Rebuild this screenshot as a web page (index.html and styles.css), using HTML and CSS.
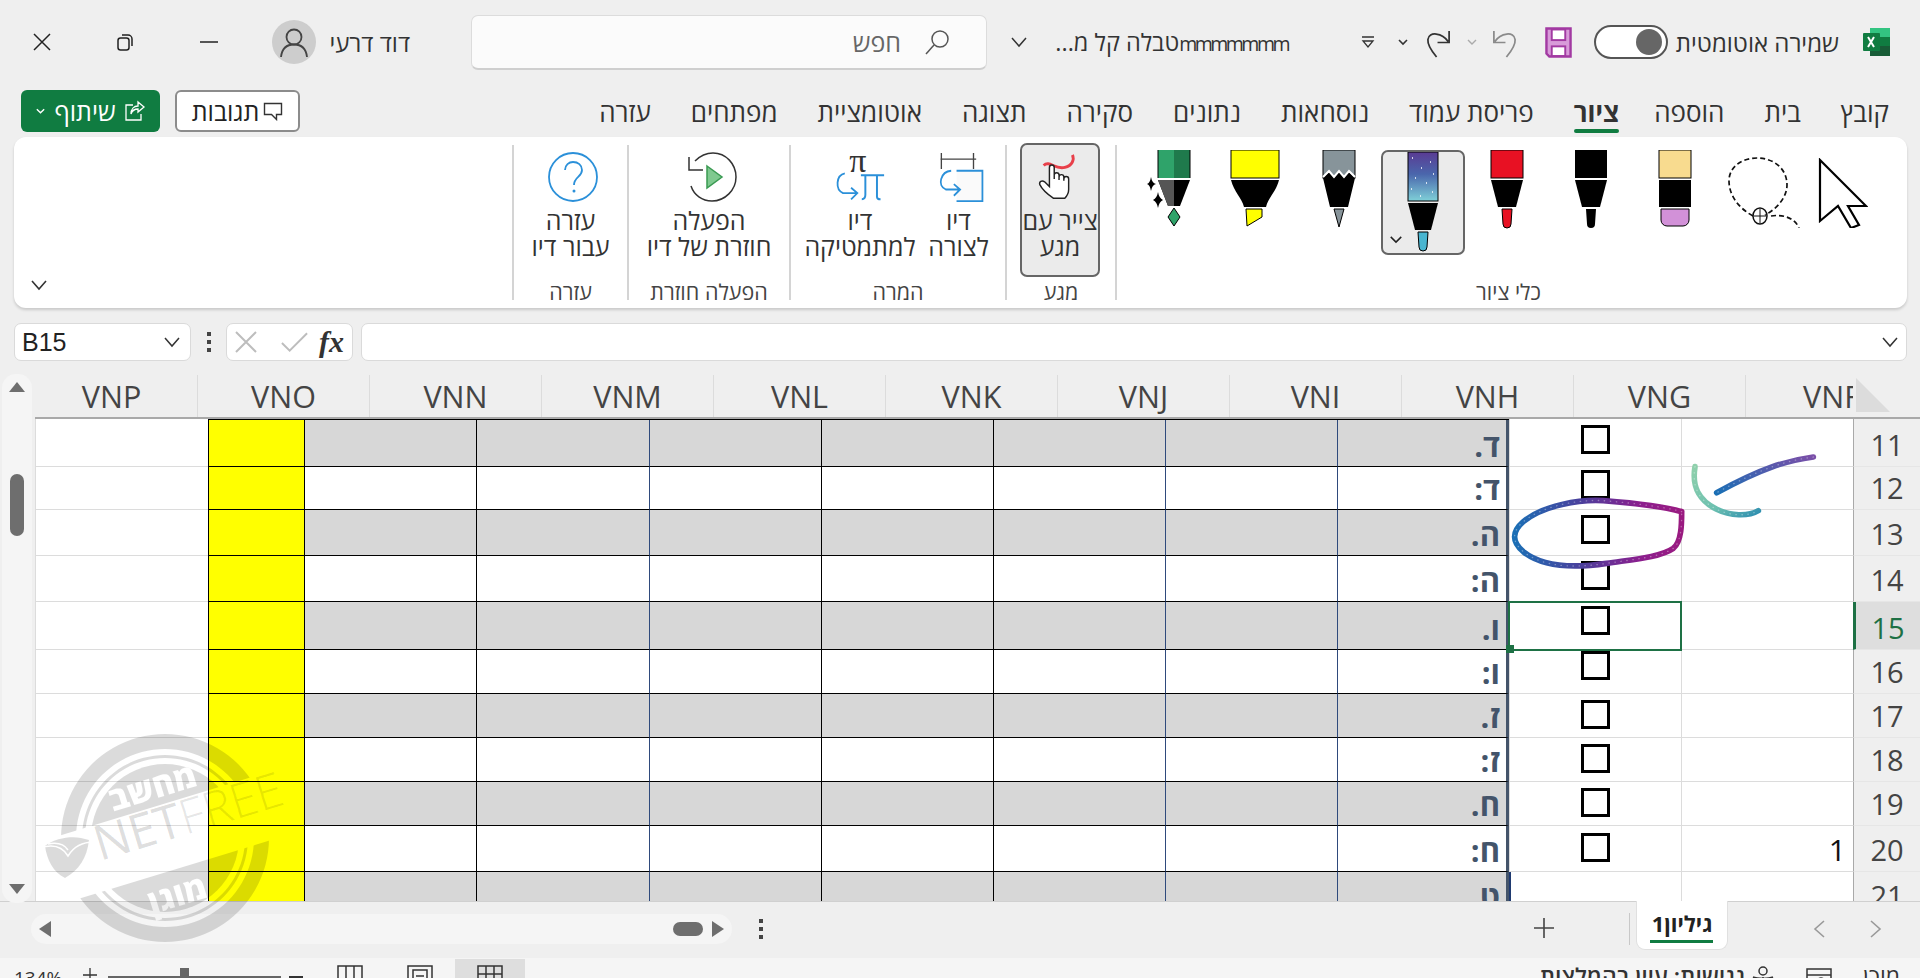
FILE: index.html
```html
<!DOCTYPE html>
<html lang="he" dir="rtl">
<head>
<meta charset="utf-8">
<title>Excel</title>
<link rel="stylesheet" href="styles.css">
</head>
<body>
<div class="app">

<header class="titlebar">
  <svg class="ic-excel" viewBox="0 0 30 30"><rect x="8" y="1" width="20" height="9" fill="#33c481"/><rect x="8" y="10" width="10" height="9" fill="#21a366"/><rect x="18" y="10" width="10" height="9" fill="#107c41"/><rect x="8" y="19" width="20" height="10" fill="#185c37"/><rect x="1" y="6" width="17" height="18" rx="1" fill="#107c41"/><path d="M6 10l6 10M12 10l-6 10" stroke="#fff" stroke-width="2"/></svg>
  <span class="autosave">שמירה אוטומטית</span>
  <span class="toggle"><span class="knob"></span></span>
  <svg class="ic-save" viewBox="0 0 28 32"><path d="M1.500 1.500h25v29h-22l-3-3z" fill="#d89bd9" stroke="#a23aa2" stroke-width="2.500"/><rect x="7" y="2.500" width="14" height="11" fill="#fff" stroke="#a23aa2" stroke-width="2"/><rect x="7" y="20" width="14" height="10" fill="#fff" stroke="#a23aa2" stroke-width="2"/></svg>
  <svg class="ic-undo" viewBox="0 0 28 32"><path d="M3 4v12h12M4 15C10 6 24 4 25 13c.5 5-4 12-9 18" fill="none" stroke="#8a8a8a" stroke-width="1.800"/></svg>
  <svg class="ic-chev gray" viewBox="0 0 12 8"><path d="M2 2l4 4 4-4" fill="none" stroke="#aaa" stroke-width="1.400"/></svg>
  <svg class="ic-redo" viewBox="0 0 28 32"><path d="M25 4v12H13M24 15C18 6 4 4 3 13c-.5 5 4 12 9 18" fill="none" stroke="#333" stroke-width="1.800"/></svg>
  <svg class="ic-chev dark" viewBox="0 0 12 8"><path d="M2 2l4 4 4-4" fill="none" stroke="#333" stroke-width="1.600"/></svg>
  <svg class="ic-custom" viewBox="0 0 14 14"><path d="M1 2h12M2 6h10L7 12z" fill="none" stroke="#333" stroke-width="1.300"/></svg>
  <span class="doc-title"><bdi class="doc-latin">mmmmmmm</bdi>טבלה קל מ...</span>
  <svg class="ic-chev-big" viewBox="0 0 18 12"><path d="M2 2l7 8 7-8" fill="none" stroke="#333" stroke-width="1.500"/></svg>
  <div class="search">
    <svg class="ic-search" viewBox="0 0 28 28"><circle cx="17" cy="11" r="8" fill="none" stroke="#555" stroke-width="1.500"/><path d="M11 17L3 26" stroke="#555" stroke-width="1.500"/></svg>
    <span class="search-text">חפש</span>
  </div>
  <span class="user">דוד דרעי</span>
  <svg class="avatar" viewBox="0 0 44 44"><circle cx="22" cy="22" r="22" fill="#cdcdcd"/><circle cx="22" cy="17" r="7.500" fill="none" stroke="#444" stroke-width="1.800"/><path d="M9 37c1-9 6-12.500 13-12.500S34 28 35 37" fill="none" stroke="#444" stroke-width="1.800"/></svg>
  <svg class="ic-win min" viewBox="0 0 20 20"><path d="M1 10h18" stroke="#222" stroke-width="1.500"/></svg>
  <svg class="ic-win max" viewBox="0 0 20 20"><rect x="3" y="6" width="11" height="12" rx="2.500" fill="none" stroke="#222" stroke-width="1.500"/><path d="M7 3h6a4 4 0 0 1 4 4v7" fill="none" stroke="#222" stroke-width="1.500"/></svg>
  <svg class="ic-win close" viewBox="0 0 20 20"><path d="M2 2l16 16M18 2L2 18" stroke="#222" stroke-width="1.500"/></svg>
</header>

<nav class="tabsrow">
  <div class="tabs">
    <span class="tab">קובץ</span>
    <span class="tab">בית</span>
    <span class="tab">הוספה</span>
    <span class="tab active">ציור</span>
    <span class="tab">פריסת עמוד</span>
    <span class="tab">נוסחאות</span>
    <span class="tab">נתונים</span>
    <span class="tab">סקירה</span>
    <span class="tab">תצוגה</span>
    <span class="tab">אוטומציית</span>
    <span class="tab">מפתחים</span>
    <span class="tab">עזרה</span>
  </div>
  <div class="actions">
    <button class="btn-comments">
      <svg class="ic-comment" viewBox="0 0 20 20"><path d="M1.500 2.500h17v11h-5v5l-5-5h-7z" fill="none" stroke="#333" stroke-width="1.400"/></svg>
      <span>תגובות</span>
    </button>
    <button class="btn-share">
      <svg class="ic-share" viewBox="0 0 22 22"><path d="M14 2l6 5-6 5V9c-4 0-6 2-7 5 0-5 3-8 7-8z" fill="none" stroke="#fff" stroke-width="1.300"/><path d="M9 5H2v15h15v-6" fill="none" stroke="#fff" stroke-width="1.300"/></svg>
      <span>שיתוף</span>
      <svg class="ic-sharechev" viewBox="0 0 12 8"><path d="M2 2l4 4 4-4" fill="none" stroke="#fff" stroke-width="1.500"/></svg>
    </button>
  </div>
</nav>

<section class="ribbon">
  <div class="group g-tools">
    <div class="tools">
      <div class="tool"><svg class="t-arrow" viewBox="0 0 50 70"><path d="M2 2l46 46H30l11 19-8 3-13-22-18 15z" fill="#fff" stroke="#000" stroke-width="2.200"/></svg></div>
      <div class="tool"><svg class="t-lasso" viewBox="0 0 74 72"><path d="M26 60C8 50 2 36 2 25 2 10 16 2 30 2c16 0 30 10 30 27 0 12-10 24-22 30" fill="none" stroke="#111" stroke-width="1.700" stroke-dasharray="5 3"/><ellipse cx="33" cy="60" rx="7" ry="8" fill="none" stroke="#111" stroke-width="1.500"/><path d="M27 60h12M33 53v14" stroke="#111" stroke-width="1"/><path d="M44 60c12-2 24 2 28 12" fill="none" stroke="#111" stroke-width="1.700" stroke-dasharray="5 3"/></svg></div>
      <div class="tool"><svg class="pen" viewBox="0 0 40 80"><rect x="4" y="0" width="32" height="28" fill="#f8db8f" stroke="#000"/><rect x="4" y="30" width="32" height="27" fill="#000"/><path d="M6 59h28v11a6 6 0 0 1-6 6H12a6 6 0 0 1-6-6z" fill="#d291d8" stroke="#000"/></svg></div>
      <div class="tool"><svg class="pen" viewBox="0 0 40 80"><rect x="4" y="0" width="32" height="28" fill="#000"/><path d="M4 30h32l-7 27H11z" fill="#000"/><path d="M15 59h10l-1 15a4 4 0 0 1-8 0z" fill="#000"/></svg></div>
      <div class="tool"><svg class="pen" viewBox="0 0 40 80"><rect x="4" y="0" width="32" height="28" fill="#e81123" stroke="#000"/><path d="M4 30h32l-7 27H11z" fill="#000"/><path d="M15 59h10l-1 15a4 4 0 0 1-8 0z" fill="#e81123" stroke="#000"/></svg></div>
      <div class="tool selected">
        <svg class="pen tall" viewBox="0 0 40 100"><defs><linearGradient id="gal" x1="0" y1="0" x2="0" y2="1"><stop offset="0" stop-color="#5a3b93"/><stop offset=".45" stop-color="#4a66ac"/><stop offset="1" stop-color="#7fd0d8"/></linearGradient></defs><rect x="5" y="0" width="30" height="49" fill="url(#gal)" stroke="#000"/><path d="M9 6h1M27 10h1M18 16h1M30 22h1M12 26h1M23 31h1M8 37h1M29 40h1M17 44h1" stroke="#fff" stroke-width="1.500"/><path d="M5 51h30l-7 27H12z" fill="#000"/><path d="M15 80h10l-1 15a4 4 0 0 1-8 0z" fill="#49b5d0" stroke="#000"/></svg>
        <svg class="tool-chev" viewBox="0 0 16 10"><path d="M2 2l6 6 6-6" fill="none" stroke="#222" stroke-width="1.700"/></svg>
      </div>
      <div class="tool"><svg class="pen" viewBox="0 0 40 80"><rect x="4" y="0" width="32" height="28" fill="#87949a" stroke="#000"/><path d="M4 28l6-6 5 6 5-6 5 6 5-6 6 6-7 29H11z" fill="#000"/><path d="M4 27l6-6 5 6 5-6 5 6 5-6 6 6" fill="none" stroke="#fff" stroke-width="2"/><path d="M15 59h10l-5 18z" fill="#87949a" stroke="#000"/></svg></div>
      <div class="tool"><svg class="pen wide" viewBox="0 0 50 80"><rect x="1" y="0" width="48" height="28" fill="#ff0" stroke="#000"/><path d="M1 30h48c-3 12-11 18-13 27H14C12 48 4 42 1 30z" fill="#000"/><path d="M16 59h16v8L17 76z" fill="#ff0" stroke="#000"/></svg></div>
      <div class="tool"><svg class="pen wide" viewBox="0 0 50 80"><rect x="12" y="0" width="16" height="28" fill="#2fa36a"/><rect x="28" y="0" width="16" height="28" fill="#1f7a4c"/><path d="M12 0v28M44 0v28" stroke="#000"/><path d="M12 30h32l-10 26H22z" fill="#000"/><path d="M12 30h16v26h-6z" fill="#555"/><path d="M28 58l6 9-6 9-6-9z" fill="#2fa36a" stroke="#000"/><path d="M5 27q1 6 5 7-4 1-5 7-1-6-4-7 3-1 4-7zM12 42q1 6 5 8-4 2-5 8-1-6-5-8 4-2 5-8z" fill="#000"/></svg></div>
    </div>
    <div class="glabel tools-label">כלי ציור</div>
  </div>

  <div class="group g-touch">
    <div class="touch-btn">
      <svg class="bigicon" viewBox="0 0 50 52"><path d="M8 14c6-6 12 5 22 2 8-2 10-8 8-13" fill="none" stroke="#e8404a" stroke-width="3"/><path d="M18 48C12 44 6 38 4 34c-1-3 2-5 5-3l5 5V16a2.500 2.500 0 0 1 5 0v12-4a2.500 2.500 0 0 1 5 0v5-3a2.500 2.500 0 0 1 5 0v4-2a2.500 2.500 0 0 1 5 0v11c0 4-2 7-4 9z" fill="#fff" stroke="#222" stroke-width="1.500"/></svg>
      <span class="btext">צייר עם<br>מגע</span>
    </div>
    <div class="glabel">מגע</div>
  </div>

  <div class="group g-convert">
    <div class="bigrow">
      <div class="bigbtn b-shape">
        <svg class="bigicon nudge" viewBox="2 0 50 56"><path d="M4 8h40M5 1v18M41 1v18" stroke="#444" stroke-width="1.500"/><path d="M22 21h29v34H22" fill="#fafafa" stroke="#2b90d9" stroke-width="2"/><path d="M16 21C4 22 0 38 10 42h15M19 36l7 6-7 7" fill="none" stroke="#2b90d9" stroke-width="2"/></svg>
        <span class="btext">דיו<br>לצורה</span>
      </div>
      <div class="bigbtn b-math">
        <svg class="bigicon" viewBox="0 0 54 56"><text x="15" y="22" class="pi-small">π</text><path d="M28 26h26M33 26v22c0 3-1 5-4 5M46 26v24c0 2 2 3 4 3" fill="none" stroke="#2b90d9" stroke-width="2.200"/><path d="M10 24C0 26-1 42 8 46h15M17 40l7 6-7 7" fill="none" stroke="#2b90d9" stroke-width="2"/></svg>
        <span class="btext">דיו<br>למתמטיקה</span>
      </div>
    </div>
    <div class="glabel">המרה</div>
  </div>

  <div class="group g-replay">
    <div class="bigbtn">
      <svg class="bigicon nudge" viewBox="0 0 50 50"><path d="M8 9C14 3 20 1 26 1c13 0 23 11 23 24S38 49 25 49c-10 0-18-6-21-15" fill="none" stroke="#333" stroke-width="1.500"/><path d="M2 5v13h14" fill="none" stroke="#333" stroke-width="1.500"/><path d="M20 14l15 11-15 11z" fill="#7fc98f" stroke="#3a9a52" stroke-width="1.500"/></svg>
      <span class="btext">הפעלה<br>חוזרת של דיו</span>
    </div>
    <div class="glabel">הפעלה חוזרת</div>
  </div>

  <div class="group g-help">
    <div class="bigbtn">
      <svg class="bigicon nudge" viewBox="0 0 50 50"><circle cx="25" cy="25" r="24" fill="none" stroke="#2b90d9" stroke-width="1.800"/><path d="M17 18c0-5 4-8 8-8 5 0 9 3 9 8 0 7-8 7-8 15" fill="none" stroke="#2b90d9" stroke-width="1.800"/><circle cx="26" cy="39" r="1.500" fill="#2b90d9"/></svg>
      <span class="btext">עזרה<br>עבור דיו</span>
    </div>
    <div class="glabel">עזרה</div>
  </div>

  <svg class="ribbon-collapse" viewBox="0 0 18 12"><path d="M2 2l7 8 7-8" fill="none" stroke="#333" stroke-width="1.600"/></svg>
</section>

<div class="formula">
  <div class="fx-input"><svg class="ic-chev-form" viewBox="0 0 18 12"><path d="M2 2l7 8 7-8" fill="none" stroke="#333" stroke-width="1.500"/></svg></div>
  <div class="fx-box">
    <i class="fx-text">fx</i>
    <svg class="fx-check" viewBox="0 0 30 22"><path d="M2 12l8 8L28 2" fill="none" stroke="#bdbdbd" stroke-width="2"/></svg>
    <svg class="fx-cross" viewBox="0 0 22 22"><path d="M1 1l20 20M21 1L1 21" stroke="#bdbdbd" stroke-width="2"/></svg>
  </div>
  <div class="vdots"><i></i><i></i><i></i></div>
  <div class="namebox"><span>B15</span><svg class="ic-chev-form" viewBox="0 0 18 12"><path d="M2 2l7 8 7-8" fill="none" stroke="#333" stroke-width="1.500"/></svg></div>
</div>

<main class="sheet">
  <div class="sheet-main">
    <div class="colhead">
      <div class="corner"><svg class="corner-tri" viewBox="0 0 34 34"><path d="M0 0v34h34z" fill="#dcdcdc"/></svg></div>
      <div class="collabels">
        <span class="ch">VNF</span><span class="ch">VNG</span><span class="ch">VNH</span><span class="ch">VNI</span><span class="ch">VNJ</span><span class="ch">VNK</span><span class="ch">VNL</span><span class="ch">VNM</span><span class="ch">VNN</span><span class="ch">VNO</span><span class="ch">VNP</span>
      </div>
    </div>
    <div class="rows">
      <div class="rh">11</div><div class="c l num"></div><div class="c l"><span class="cb o6"></span></div><div class="c g t nv">ד.</div><div class="c g nv"></div><div class="c g"></div><div class="c g"></div><div class="c g nv"></div><div class="c g"></div><div class="c g"></div><div class="c y"></div><div class="c l"></div>
      <div class="rh">12</div><div class="c l num"></div><div class="c l"><span class="cb o3"></span></div><div class="c w t nv">ד:</div><div class="c w nv"></div><div class="c w"></div><div class="c w"></div><div class="c w nv"></div><div class="c w"></div><div class="c w"></div><div class="c y"></div><div class="c l"></div>
      <div class="rh">13</div><div class="c l num"></div><div class="c l"><span class="cb o5"></span></div><div class="c g t nv">ה.</div><div class="c g nv"></div><div class="c g"></div><div class="c g"></div><div class="c g nv"></div><div class="c g"></div><div class="c g"></div><div class="c y"></div><div class="c l"></div>
      <div class="rh">14</div><div class="c l num"></div><div class="c l"><span class="cb o5"></span></div><div class="c w t nv">ה:</div><div class="c w nv"></div><div class="c w"></div><div class="c w"></div><div class="c w nv"></div><div class="c w"></div><div class="c w"></div><div class="c y"></div><div class="c l"></div>
      <div class="rh sel">15</div><div class="c l num"></div><div class="c l"><span class="cb o4"></span></div><div class="c g t nv">ו.</div><div class="c g nv"></div><div class="c g"></div><div class="c g"></div><div class="c g nv"></div><div class="c g"></div><div class="c g"></div><div class="c y"></div><div class="c l"></div>
      <div class="rh">16</div><div class="c l num"></div><div class="c l"><span class="cb o1"></span></div><div class="c w t nv">ו:</div><div class="c w nv"></div><div class="c w"></div><div class="c w"></div><div class="c w nv"></div><div class="c w"></div><div class="c w"></div><div class="c y"></div><div class="c l"></div>
      <div class="rh">17</div><div class="c l num"></div><div class="c l"><span class="cb o6"></span></div><div class="c g t nv">ז.</div><div class="c g nv"></div><div class="c g"></div><div class="c g"></div><div class="c g nv"></div><div class="c g"></div><div class="c g"></div><div class="c y"></div><div class="c l"></div>
      <div class="rh">18</div><div class="c l num"></div><div class="c l"><span class="cb o6"></span></div><div class="c w t nv">ז:</div><div class="c w nv"></div><div class="c w"></div><div class="c w"></div><div class="c w nv"></div><div class="c w"></div><div class="c w"></div><div class="c y"></div><div class="c l"></div>
      <div class="rh">19</div><div class="c l num"></div><div class="c l"><span class="cb o6"></span></div><div class="c g t nv">ח.</div><div class="c g nv"></div><div class="c g"></div><div class="c g"></div><div class="c g nv"></div><div class="c g"></div><div class="c g"></div><div class="c y"></div><div class="c l"></div>
      <div class="rh">20</div><div class="c l num">1</div><div class="c l"><span class="cb o7"></span></div><div class="c w t nv">ח:</div><div class="c w nv"></div><div class="c w"></div><div class="c w"></div><div class="c w nv"></div><div class="c w"></div><div class="c w"></div><div class="c y"></div><div class="c l"></div>
      <div class="rh">21</div><div class="c l num"></div><div class="c l nvl"></div><div class="c g t nv">ט.</div><div class="c g nv"></div><div class="c g"></div><div class="c g"></div><div class="c g nv"></div><div class="c g"></div><div class="c g"></div><div class="c y"></div><div class="c l"></div>
      <div class="selection"><span class="handle"></span></div>
    </div>
  </div>
  <div class="vscroll">
    <span class="tri-up"></span>
    <span class="vthumb"></span>
    <span class="tri-down"></span>
  </div>
</main>

<div class="sheetbar">
  <div class="nav">
    <svg class="navchev" viewBox="0 0 12 20"><path d="M1 2l9 8-9 8" fill="none" stroke="#999" stroke-width="1.600"/></svg>
    <svg class="navchev" viewBox="0 0 12 20"><path d="M11 2l-9 8 9 8" fill="none" stroke="#999" stroke-width="1.600"/></svg>
  </div>
  <div class="sheettab"><span>גיליון1</span></div>
  <span class="tabsep"></span>
  <svg class="ic-plus" viewBox="0 0 22 22"><path d="M1 11h20M11 1v20" stroke="#444" stroke-width="1.600"/></svg>
  <div class="vdots small"><i></i><i></i><i></i></div>
  <div class="hscroll"><span class="tri-right"></span><span class="hthumb"></span><span class="tri-left"></span></div>
</div>

<footer class="status">
  <span class="st-ready">מוכן</span>
  <svg class="st-icon" viewBox="0 0 26 26"><rect x="1" y="2" width="24" height="22" fill="none" stroke="#333" stroke-width="1.500"/><path d="M1 8h24" stroke="#333" stroke-width="1.500"/><circle cx="15" cy="15" r="4" fill="none" stroke="#333" stroke-width="1.500"/></svg>
  <svg class="st-people" viewBox="0 0 24 24"><circle cx="12" cy="6" r="4" fill="none" stroke="#333" stroke-width="1.500"/><path d="M2 12c4 2 16 2 20 0M12 12v8M6 24l6-6 6 6" fill="none" stroke="#333" stroke-width="1.500"/></svg>
  <span class="st-access">נגישות: עיין בהמלצות</span>
  <div class="st-left">
    <span class="view active"><svg class="v-ic" viewBox="0 0 26 26"><rect x="1" y="1" width="24" height="24" fill="none" stroke="#333" stroke-width="1.500"/><path d="M9 1v24M17 1v24M1 9h24M1 17h24" stroke="#333" stroke-width="1.500"/></svg></span>
    <span class="view"><svg class="v-ic" viewBox="0 0 26 26"><rect x="1" y="1" width="24" height="24" fill="none" stroke="#333" stroke-width="1.500"/><rect x="6" y="5" width="14" height="20" fill="none" stroke="#333" stroke-width="1.500"/><path d="M9 11h8M9 15h8" stroke="#333" stroke-width="1.500"/></svg></span>
    <span class="view"><svg class="v-ic" viewBox="0 0 26 26"><rect x="1" y="1" width="24" height="24" fill="none" stroke="#333" stroke-width="1.500"/><path d="M9 1v24M17 1v24" stroke="#333" stroke-width="1.500"/></svg></span>
    <span class="zminus"></span>
    <span class="zslider"><span class="zthumb"></span></span>
    <svg class="zplus" viewBox="0 0 14 14"><path d="M0 7h14M7 0v14" stroke="#333" stroke-width="1.300"/></svg>
    <span class="zpct">134%</span>
  </div>
</footer>

<svg class="ink" viewBox="0 0 1500 900">
  <defs>
    <linearGradient id="inkA" x1="0" y1="0" x2="1" y2="0"><stop offset="0" stop-color="#1b6fb5"/><stop offset=".4" stop-color="#4b3f9c"/><stop offset=".75" stop-color="#8b1f8e"/><stop offset="1" stop-color="#9a1a80"/></linearGradient>
    <linearGradient id="inkB" x1="0" y1="1" x2="1" y2="0"><stop offset="0" stop-color="#1b6fb5"/><stop offset="1" stop-color="#7a4fa8"/></linearGradient>
    <linearGradient id="inkC" x1="0" y1="0" x2="1" y2="1"><stop offset="0" stop-color="#8fd0ac"/><stop offset=".6" stop-color="#6cc0b0"/><stop offset="1" stop-color="#2f8fb0"/></linearGradient>
  </defs>
  <path class="stroke" stroke="url(#inkA)" d="M785 395C740 382 650 370 550 362 480 358 370 375 310 425 275 455 275 485 310 515 360 555 440 568 560 550 640 538 720 532 760 505 785 485 785 430 785 395"/>
  <path class="glit" d="M785 395C740 382 650 370 550 362 480 358 370 375 310 425 275 455 275 485 310 515 360 555 440 568 560 550 640 538 720 532 760 505 785 485 785 430 785 395"/>
  <path class="stroke" stroke="url(#inkB)" d="M1180 231C1100 242 1030 262 890 338"/>
  <path class="glit" d="M1180 231C1100 242 1030 262 890 338"/>
  <path class="stroke" stroke="url(#inkC)" d="M825 260C815 320 835 360 890 388 930 408 985 410 1015 392"/>
  <path class="glit" d="M825 260C815 320 835 360 890 388 930 408 985 410 1015 392"/>
</svg>

<svg class="watermark" viewBox="0 0 240 224">
  <defs>
    <mask id="wm" maskUnits="userSpaceOnUse" x="0" y="0" width="240" height="224">
      <rect width="240" height="224" fill="#fff"/>
      <rect x="-40" y="79" width="320" height="66" fill="#000" transform="rotate(-17 105 112)"/>
      <text x="93" y="73" class="wm-he" transform="rotate(-17 93 63)">מחשב</text>
      <text x="118" y="180" class="wm-he" transform="rotate(-17 118 170)">מוגן</text>
    </mask>
  </defs>
  <g mask="url(#wm)" fill="rgba(0,0,0,.14)">
    <path fill-rule="evenodd" d="M105 8a104 104 0 1 0 .01 0zM105 23a89 89 0 1 1-.01 0z"/>
    <path fill-rule="evenodd" d="M105 29a83 83 0 1 0 .01 0zM105 32a80 80 0 1 1-.01 0z"/>
    <circle cx="105" cy="112" r="74"/>
  </g>
  <text x="40" y="135" class="wm-net" transform="rotate(-17 40 135)">NET<tspan class="wm-free">FREE</tspan></text>
  <path d="M-15 120c10-8 26-10 36-8l8 2c-2 18-10 30-24 38C-7 146-13 134-15 120z" fill="rgba(0,0,0,.14)"/>
  <path d="M-20 122c12-4 22-2 28 8 6-10 16-14 26-14M-12 118c10-2 16 0 20 6" fill="none" stroke="#fff" stroke-width="1.500"/>
</svg>

</div>
</body>
</html>
```
FILE: styles.css
```css
* { box-sizing: border-box; }
html, body { margin: 0; height: 978px; overflow: hidden; }
body { background: #efefef; font-family: "Open Sans", "Liberation Sans", "DejaVu Sans", sans-serif; color: #333; }
.app { position: relative; width: 1920px; height: 978px; overflow: hidden; display: flex; flex-direction: column; }
.app > * { flex: none; }
svg { display: block; flex: none; }

/* title bar */
.titlebar { height: 84px; display: flex; align-items: center; padding: 0 28px 0 0; font-size: 24px; }
.ic-excel { width: 30px; height: 30px; }
.autosave { width: 164px; margin-right: 23px; white-space: nowrap; }
.toggle { width: 74px; height: 34px; margin-right: 7px; border: 2px solid #555; border-radius: 17px; background: #fff; display: flex; align-items: center; padding-right: 4px; }
.knob { width: 26px; height: 26px; border-radius: 50%; background: #666; }
.ic-save { width: 27px; height: 31px; margin-right: 22px; }
.ic-undo { width: 27px; height: 31px; margin-right: 27px; }
.ic-chev { width: 12px; height: 8px; margin-right: 13px; }
.ic-redo { width: 27px; height: 31px; margin-right: 14px; }
.ic-chev.dark { margin-right: 16px; }
.ic-custom { width: 14px; height: 14px; margin-right: 22px; }
.doc-title { width: 235px; margin-right: 73px; white-space: nowrap; font-size: 23.500px; }
.doc-latin { font-size: 19.500px; letter-spacing: -2.500px; }
.ic-chev-big { width: 18px; height: 12px; margin-right: 25px; }
.search { width: 516px; height: 55px; margin-right: 23px; background: #fbfbfb; border: 1px solid #dcdcdc; border-bottom: 2px solid #cfcfcf; border-radius: 7px; display: flex; align-items: center; padding-right: 35px; }
.ic-search { width: 28px; height: 28px; }
.search-text { margin-right: 22px; color: #666; font-size: 25px; }
.user { width: 84px; margin-right: 61px; margin-left: 10px; white-space: nowrap; }
.avatar { width: 44px; height: 44px; margin-left: 53px; }
.ic-win { width: 20px; height: 20px; }
.ic-win.min { margin-left: 64px; }
.ic-win.max { margin-left: 63px; }

/* tabs */
.tabsrow { height: 53px; display: flex; align-items: center; justify-content: space-between; padding: 0 31px 0 21px; }
.tabs { display: flex; gap: 40px; height: 53px; align-items: center; }
.tab { position: relative; font-size: 26px; color: #333; white-space: nowrap; top: 1px; }
.tab.active { font-weight: 700; margin-right: -5px; }
.tab.active::after { content: ""; position: absolute; left: 0; right: 0; bottom: -3px; height: 4px; background: #107c41; border-radius: 2px; }
.actions { display: flex; gap: 15px; }
.btn-comments, .btn-share { font: inherit; font-size: 25px; height: 42px; border-radius: 6px; display: flex; align-items: center; justify-content: center; gap: 4px; padding: 0; }
.btn-comments { width: 125px; background: #fff; border: 2px solid #8c8c8c; color: #222; }
.ic-comment { width: 20px; height: 20px; }
.btn-share { width: 139px; background: #107c41; border: 0; color: #fff; gap: 8px; }
.ic-share { width: 22px; height: 22px; }
.ic-sharechev { width: 11px; height: 8px; }

/* ribbon */
.ribbon { position: relative; height: 171px; margin: 0 13px 0 14px; padding: 8px 0 0; background: #fff; border-radius: 12px; box-shadow: 0 2px 3px rgba(0,0,0,.16); display: flex; font-size: 25px; }
.group { height: 155px; display: flex; flex-direction: column; border-left: 2px solid #d4d4d4; }
.glabel { margin-top: auto; margin-bottom: -4px; height: 24px; line-height: 24px; font-size: 21.500px; text-align: center; color: #444; white-space: nowrap; }
.tools-label { padding-right: 7px; }
.g-tools { width: 792px; }
.g-touch { width: 110px; }
.g-convert { width: 216px; }
.g-replay { width: 162px; }
.g-help { width: 115px; }
.tools { display: flex; padding: 5px 22px 0 0; }
.tool { position: relative; width: 84px; display: flex; justify-content: center; height: 105px; }
.pen { width: 40px; height: 80px; }
.pen.wide { width: 50px; }
.pen.tall { height: 100px; }
.t-arrow { width: 50px; height: 70px; margin-top: 8px; }
.t-lasso { width: 74px; height: 72px; margin-top: 6px; margin-right: -10px; }
.tool.selected { height: 105px; background: #ebebeb; border: 2px solid #666; border-radius: 7px; }
.tool-chev { position: absolute; left: 6px; bottom: 9px; width: 14px; height: 9px; }
.touch-btn { width: 80px; height: 134px; margin: -2px 15px 0 15px; background: #ebebeb; border: 2px solid #666; border-radius: 7px; display: flex; flex-direction: column; align-items: center; padding-top: 7px; }
.bigicon { width: 50px; height: 50px; }
.bigicon.nudge { margin-left: 5px; }
.btext { display: block; margin-top: 5px; line-height: 26px; text-align: center; white-space: nowrap; color: #333; }
.bigrow { display: flex; justify-content: center; gap: 18px; }
.bigbtn { display: flex; flex-direction: column; align-items: center; padding-top: 7px; }
.b-shape { width: 58px; }
.b-math { width: 103px; }
.pi-small { font: 38px "Liberation Serif", serif; fill: #333; direction: ltr; }
.ribbon-collapse { position: absolute; left: 16px; bottom: 17px; width: 18px; height: 12px; }

/* formula */
.formula { height: 38px; margin: 15px 13px 14px 14px; display: flex; }
.fx-input { flex: 1; height: 38px; margin-left: 8px; background: #fff; border: 1px solid #dadada; border-radius: 7px; display: flex; align-items: center; padding-right: 7px; }
.ic-chev-form { width: 18px; height: 12px; }
.fx-box { width: 127px; height: 38px; background: #fff; border: 1px solid #dadada; border-radius: 7px; display: flex; align-items: center; justify-content: space-between; padding: 0 8px; }
.fx-text { font: italic 700 30px "Liberation Serif", serif; color: #333; direction: ltr; }
.fx-check { width: 29px; height: 22px; }
.fx-cross { width: 22px; height: 22px; margin-right: 12px; }
.vdots { width: 35px; display: flex; flex-direction: column; align-items: center; justify-content: center; gap: 4px; }
.vdots i { display: block; width: 4px; height: 4px; background: #444; }
.namebox { width: 177px; height: 38px; background: #fff; border: 1px solid #dadada; border-radius: 7px; display: flex; direction: ltr; align-items: center; justify-content: space-between; padding: 0 9px 0 7px; font: 25px "Liberation Sans", sans-serif; color: #222; }

/* sheet */
.sheet { height: 526px; display: flex; }
.sheet-main { flex: 1; min-width: 0; }
.colhead { height: 44px; display: flex; border-bottom: 2px solid #a9a9a9; }
.corner { width: 67px; flex: none; position: relative; z-index: 1; background: #efefef; }
.corner-tri { width: 34px; height: 34px; margin-right: 30px; margin-top: 3px; }
.collabels { flex: 1; min-width: 0; display: flex; overflow: hidden; }
.ch { flex: none; width: 172px; height: 42px; line-height: 42px; text-align: center; font-size: 30.500px; color: #444; border-left: 1px solid #dcdcdc; }
.ch:first-child { margin-right: -64px; }
.rows { position: relative; display: grid; height: 482px; overflow: hidden; grid-template-columns: 67px repeat(7, 172px) 173px 172px 96px 173px; grid-template-rows: 48px 43px 46px 46px 48px 44px 44px 44px 44px 46px 46px; }
.rows::before { content: ""; position: absolute; z-index: 1; top: 0; left: 173px; right: 411px; height: 1px; background: #000; }
.rh { background: #efefef; border-left: 1px solid #a9a9a9; border-bottom: 1px solid #e6e6e6; font-size: 29px; line-height: 36px; color: #444; display: flex; align-items: flex-end; justify-content: center; padding-bottom: 3px; }
.rh.sel { background: #dedede; color: #1e7145; border-left: 3px solid #1e7145; }
.c { position: relative; background: #fff; border-bottom: 1px solid #000; border-left: 1px solid #000; display: flex; overflow: hidden; }
.c.l { background: #fff; border-bottom: 1px solid #dcdcdc; border-left: 1px solid #dcdcdc; justify-content: center; }
.c.g { background: #d7d7d7; }
.c.w { background: #fff; }
.c.y { background: #ff0; }
.c.nv { border-left-color: #2f4a7c; }
.c.nvl { border-left: 2px solid #1f3a70; }
.c.t { border-right: 3px solid #44546a; font-weight: 700; font-size: 31px; line-height: 36px; color: #44546a; padding: 0 6px 3px 0; align-items: flex-end; }
.c.num { justify-content: flex-start; align-items: flex-end; padding: 0 7px 3px 0; font-size: 30px; line-height: 36px; color: #111; }
.cb { display: block; width: 29px; height: 29px; border: 3px solid #000; background: #fff; }
.o1 { margin-top: 1px; } .o3 { margin-top: 3px; } .o4 { margin-top: 4px; } .o5 { margin-top: 5px; } .o6 { margin-top: 6px; } .o7 { margin-top: 7px; }
.selection { position: absolute; z-index: 2; right: 238px; top: 182px; width: 174px; height: 50px; border: 2px solid #1e7145; }
.handle { position: absolute; left: -4px; bottom: -4px; width: 8px; height: 8px; background: #1e7145; }
.vscroll { width: 30px; height: 529px; margin: -1px 3px 0 2px; background: #f5f5f5; border-radius: 14px; position: relative; flex: none; }
.tri-up, .tri-down { position: absolute; left: 7px; width: 0; height: 0; border-left: 8px solid transparent; border-right: 8px solid transparent; }
.tri-up { top: 8px; border-bottom: 10px solid #6e6e6e; }
.tri-down { bottom: 9px; border-top: 10px solid #6e6e6e; }
.vthumb { position: absolute; left: 8px; top: 100px; width: 14px; height: 62px; background: #6e6e6e; border-radius: 7px; }

/* sheet bar */
.sheetbar { height: 54px; display: flex; align-items: flex-start; border-top: 1px solid #d0d0d0; }
.nav { width: 192px; height: 53px; display: flex; align-items: center; padding-right: 38px; gap: 45px; }
.navchev { width: 12px; height: 20px; }
.sheettab { width: 92px; height: 49px; background: #fff; border-radius: 0 0 9px 9px; border: 1px solid #e0e0e0; border-top: 0; display: flex; justify-content: center; padding-top: 10px; margin-top: -1px; position: relative; }
.sheettab span { position: relative; display: block; height: 33px; font-size: 22px; font-weight: 700; color: #222; line-height: 24px; padding: 0 2px; }
.sheettab::after { content: ""; position: absolute; left: 13px; right: 14px; bottom: 6px; height: 3px; background: #107c41; }
.tabsep { width: 1px; height: 32px; margin: 11px 6px 0 0; background: #c8c8c8; }
.ic-plus { width: 22px; height: 22px; margin: 15px 74px 0 0; }
.vdots.small { width: 8px; height: 53px; margin-right: 768px; }
.hscroll { width: 701px; height: 30px; margin: 12px 25px 0 0; background: #f5f5f5; border-radius: 15px; display: flex; align-items: center; padding: 0 8px; }
.tri-right { border-top: 8px solid transparent; border-bottom: 8px solid transparent; border-left: 12px solid #6e6e6e; }
.tri-left { margin-right: auto; border-top: 8px solid transparent; border-bottom: 8px solid transparent; border-right: 12px solid #6e6e6e; }
.hthumb { width: 30px; height: 14px; margin-right: 9px; background: #6e6e6e; border-radius: 7px; }

/* status */
.status { position: relative; margin-top: 3px; height: 40px; background: #f5f5f5; display: flex; align-items: flex-start; padding: 5px 20px 0 0; font-size: 23px; color: #333; }
.st-ready { width: 36px; line-height: 26px; white-space: nowrap; }
.st-icon { width: 26px; height: 26px; margin: 4px 32px 0 0; }
.st-people { width: 24px; height: 24px; margin: 2px 31px 0 0; }
.st-access { font-weight: 600; line-height: 26px; margin-right: 6px; white-space: nowrap; }
.st-left { position: absolute; left: 14px; top: 0; height: 40px; display: flex; align-items: flex-start; }
.view { display: flex; justify-content: center; padding-top: 7px; height: 40px; width: 70px; }
.view.active { margin-top: 1px; padding-top: 6px; background: #dedede; }
.v-ic { width: 26px; height: 26px; }
.zminus { width: 14px; height: 2px; margin: 18px 12px 0 0; background: #333; }
.zslider { position: relative; width: 173px; height: 3px; margin: 18px 8px 0 0; background: #666; }
.zthumb { position: absolute; left: 72px; top: -8px; width: 9px; height: 16px; background: #666; }
.zplus { width: 14px; height: 14px; margin: 10px 11px 0 0; }
.zpct { margin: 7px 21px 0 0; font-size: 19px; line-height: 26px; direction: ltr; }

/* overlays */
.ink { position: absolute; left: 1420px; top: 380px; width: 500px; height: 300px; }
.stroke { fill: none; stroke-width: 17; stroke-linecap: round; stroke-linejoin: round; }
.glit { fill: none; stroke: rgba(255,255,255,.35); stroke-width: 4; stroke-linecap: round; stroke-dasharray: 1 17; }
.watermark { position: absolute; left: 60px; top: 726px; width: 240px; height: 224px; pointer-events: none; overflow: visible; }
.wm-he { font: 800 33px "Open Sans", "Liberation Sans", sans-serif; fill: #000; text-anchor: middle; }
.wm-net { font: 400 48px "Open Sans", "Liberation Sans", sans-serif; fill: rgba(0,0,0,.14); direction: ltr; unicode-bidi: bidi-override; }
.wm-free { font-weight: 300; fill: rgba(0,0,0,.1); }
```
